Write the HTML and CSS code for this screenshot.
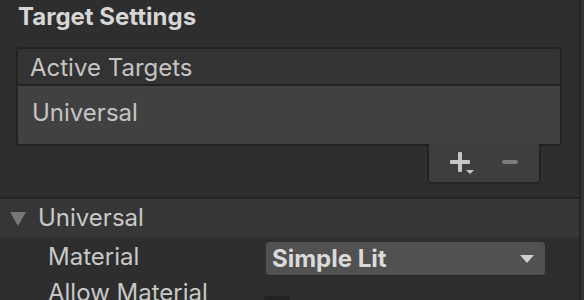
FILE: index.html
```html
<!DOCTYPE html>
<html>
<head>
<meta charset="utf-8">
<link rel="stylesheet" href="styles.css">
</head>
<body>
<div class="page">
  <div class="main">
    <div class="title">Target Settings</div>
    <div class="list">
      <div class="list-head">Active Targets</div>
      <div class="list-body"><span class="item">Universal</span></div>
    </div>
    <div class="footer-wrap">
      <div class="footer">
        <svg class="plus" width="28" height="26" viewBox="0 0 28 26">
          <rect x="2" y="9" width="20" height="4" rx="1" fill="#c6c6c6"/>
          <rect x="10" y="1" width="4" height="20" rx="1" fill="#c6c6c6"/>
          <path d="M18 19 H26 L22 23 Z" fill="#c6c6c6"/>
        </svg>
        <svg class="minus" width="18" height="6" viewBox="0 0 18 6">
          <rect x="1" y="1" width="16" height="4" rx="2" fill="#7c7c7c"/>
        </svg>
      </div>
    </div>
    <div class="fold">
      <svg class="tri" width="18" height="16" viewBox="0 0 18 16"><path d="M1 1 H17 L9 15 Z" fill="#777"/></svg>
      <span>Universal</span>
    </div>
    <div class="prop">
      <span class="label">Material</span>
      <div class="dropdown">
        <span>Simple Lit</span>
        <svg width="14" height="9" viewBox="0 0 14 9"><path d="M0 0 H14 L7 8 Z" fill="#cfcfcf"/></svg>
      </div>
    </div>
    <div class="prop prop2">
      <span class="label">Allow Material Override</span>
      <div class="check"></div>
    </div>
  </div>
  <div class="scroll"></div>
</div>
</body>
</html>
```
FILE: styles.css
```css
html, body {
  margin: 0;
  padding: 0;
  background: #2e2e2e;
  overflow: hidden;
}
body {
  font-family: Inter, "Noto Sans", sans-serif;
  color: #c8c8c8;
}
.page {
  display: flex;
  width: 584px;
  height: 300px;
  overflow: hidden;
}
.main {
  width: 579px;
  flex: none;
}
.scroll {
  width: 3px;
  border-left: 2px solid #242424;
  background: #353535;
  flex: none;
}
.title {
  font-size: 24px;
  font-weight: 700;
  color: #d6d6d6;
  height: 47px;
  line-height: 34px;
  padding-left: 18px;
}
.list {
  margin-left: 16px;
  width: 542px;
  border: 2px solid #232323;
  border-radius: 4px;
  overflow: hidden;
}
.list-head {
  height: 35px;
  line-height: 37px;
  background: #333333;
  border-bottom: 2px solid #232323;
  padding-left: 12px;
  font-size: 24px;
  color: #c4c4c4;
}
.list-body {
  height: 58px;
  background: #414141;
  padding-left: 14px;
  font-size: 24px;
  line-height: 54px;
  color: #c4c4c4;
}
.footer-wrap {
  display: flex;
  justify-content: flex-end;
  padding-right: 38px;
  margin-top: -2px;
}
.footer {
  width: 110px;
  height: 38px;
  background: #3e3e3e;
  border: 2px solid #232323;
  border-top: none;
  border-radius: 0 0 4px 4px;
  display: flex;
  align-items: center;
}
.plus {
  margin-left: 19px;
  margin-top: 1px;
}
.minus {
  margin-left: 25px;
  margin-top: -3px;
}
.fold {
  margin-top: 13px;
  border-top: 2px solid #242424;
  background: #363636;
  height: 39px;
  display: flex;
  align-items: center;
  font-size: 24px;
  color: #c8c8c8;
}
.tri {
  margin-left: 9px;
  margin-right: 11px;
  margin-top: 1px;
}
.fold span {
  margin-bottom: 2px;
}
.prop {
  display: flex;
  align-items: center;
  height: 42px;
}
.label {
  width: 218px;
  padding-left: 48px;
  padding-bottom: 6px;
  font-size: 24px;
  color: #c8c8c8;
  flex: none;
}
.dropdown {
  width: 279px;
  height: 34px;
  background: #515151;
  border-radius: 4px;
  border-bottom: 1px solid #262626;
  display: flex;
  align-items: center;
  justify-content: space-between;
  padding: 0 11px 0 6px;
  box-sizing: border-box;
  font-weight: 700;
  font-size: 24px;
  color: #dadada;
}
.dropdown svg {
  margin-top: 1px;
}
.prop2 {
  align-items: flex-start;
}
.prop2 .label {
  padding-top: 0;
  padding-bottom: 0;
  margin-top: -2px;
  line-height: 30px;
}
.check {
  width: 26px;
  height: 26px;
  border-radius: 4px;
  background: #222222;
  margin-top: 16px;
  margin-left: -2px;
}
```
